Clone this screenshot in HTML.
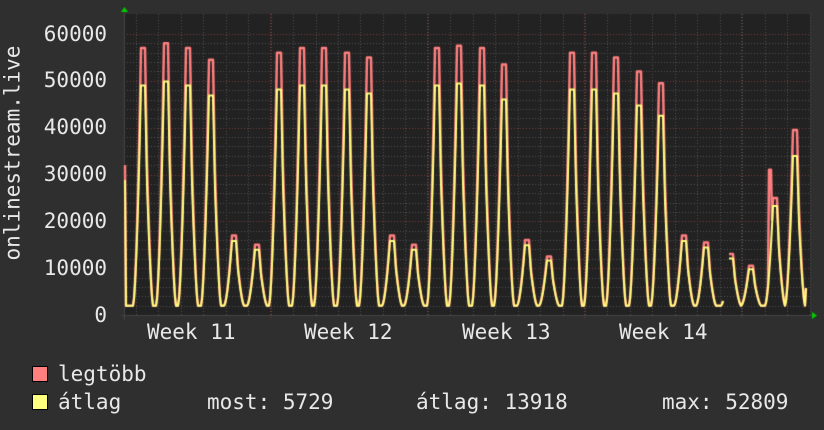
<!DOCTYPE html>
<html><head><meta charset="utf-8"><style>
html,body{margin:0;padding:0;background:#2f2f2f;}
body{width:824px;height:430px;position:relative;overflow:hidden;font-family:"DejaVu Sans Mono","Liberation Mono",monospace;color:#e8e8e8;font-size:21px;}
canvas{position:absolute;left:0;top:0;}
.t{position:absolute;white-space:pre;line-height:1;}
.sq{position:absolute;width:14px;height:14px;border:1px solid #000;}
</style></head><body>
<canvas id="c" width="824" height="430"></canvas>
<div class="t" style="right:717px;top:24px">60000</div>
<div class="t" style="right:717px;top:70px">50000</div>
<div class="t" style="right:717px;top:117px">40000</div>
<div class="t" style="right:717px;top:164px">30000</div>
<div class="t" style="right:717px;top:211px">20000</div>
<div class="t" style="right:717px;top:258px">10000</div>
<div class="t" style="right:717px;top:305px">0</div>
<div class="t" style="left:-82px;top:155px;width:190px;text-align:center;transform:rotate(-90deg);">onlinestream.live</div>
<div class="t" style="left:147px;top:322px">Week 11</div>
<div class="t" style="left:304px;top:322px">Week 12</div>
<div class="t" style="left:462px;top:322px">Week 13</div>
<div class="t" style="left:619px;top:322px">Week 14</div>
<div class="sq" style="left:32px;top:366px;background:#ff7f7f"></div>
<div class="sq" style="left:32px;top:394px;background:#ffff7f"></div>
<div class="t" style="left:58px;top:364px">legtöbb</div>
<div class="t" style="left:58px;top:392px">átlag</div>
<div class="t" style="left:207px;top:392px">most: 5729</div>
<div class="t" style="left:416px;top:392px">átlag: 13918</div>
<div class="t" style="left:662px;top:392px">max: 52809</div>
<script>
var c=document.getElementById('c').getContext('2d');
var L=124,R=810,T=14,B=315;
c.fillStyle='#222';c.fillRect(L,T,R-L,B-T);
function Y(v){return B-v*281/60000;}
c.lineWidth=1;
c.setLineDash([1,2]);c.strokeStyle='#505050';
for(var v=2000;v<=60000;v+=2000){var y=Math.round(Y(v))+0.5;c.beginPath();c.moveTo(L,y);c.lineTo(R,y);c.stroke();}
for(var x=136;x<R;x+=22.45){var xx=Math.round(x)+0.5;c.beginPath();c.moveTo(xx,T);c.lineTo(xx,B);c.stroke();}
c.strokeStyle='#7a3a3a';c.setLineDash([1,2]);
for(var v=10000;v<=60000;v+=10000){var y=Math.round(Y(v))+0.5;c.beginPath();c.moveTo(L,y);c.lineTo(R,y);c.stroke();}
[270,427,584,741].forEach(function(x){c.beginPath();c.moveTo(x+.5,T);c.lineTo(x+.5,B+3);c.stroke();});
c.setLineDash([]);
c.strokeStyle='#444';c.beginPath();c.moveTo(L+.5,10);c.lineTo(L+.5,B+5);c.moveTo(L-3,B+.5);c.lineTo(816,B+.5);c.stroke();
c.fillStyle='#00cc00';
c.beginPath();c.moveTo(121,12);c.lineTo(128,12);c.lineTo(124.5,7);c.fill();
c.beginPath();c.moveTo(812,312);c.lineTo(812,319);c.lineTo(817,315.5);c.fill();
var days=[[143,57],[166,58],[188,57],[211,54.5],[234,17],[257,15],[279,56],[302,57],[324,57],[347,56],[369,55],[392,17],[414,15],[437,57],[459,57.5],[482,57],[504,53.5],[527,16],[549,12.5],[572,56],[594,56],[616,55],[639,52],[661,49.5],[684,17],[706,15.5],[731,13],[751,10.5],[775,25],[795,39.5]];
function shape(dx){
 if(dx<-10||dx>10)return 0;
 if(dx<-2){var t=(dx+10)/8;return Math.pow(t,1.7);}
 if(dx<=2)return 1;
 if(dx<=4)return 1-(dx-2)/2*0.45;
 return 0.55*Math.pow(1-(dx-4)/6,1.5);
}
function val(x,avg){
 var m=0;
 days.forEach(function(d){var pk=d[1]*1000*(avg?(d[1]>30?0.86:0.93):1);var s=shape(x-d[0]);var v=s*(pk-2000);if(v>m)m=v;});
 var v=2000+m;
 if(!avg&&x>=769&&x<=771)v=31000;
 return v;
}
function draw(avg,col,w){
 c.strokeStyle=col;c.lineWidth=w;c.lineJoin='round';c.beginPath();var st=true;
 for(var x=125;x<=806;x++){
  if(x>=724&&x<=728){st=true;continue;}
  var y=Y(val(x,avg));if(x===125)y=Y(32000*(avg?0.9:1));
  if(x===806)y=Y(5729);
  if(st){c.moveTo(x,y);st=false;}else c.lineTo(x,y);
 }
 c.stroke();
}
draw(false,'#ff7f7f',2.5);
draw(true,'#ffff7f',2);
</script>
</body></html>
